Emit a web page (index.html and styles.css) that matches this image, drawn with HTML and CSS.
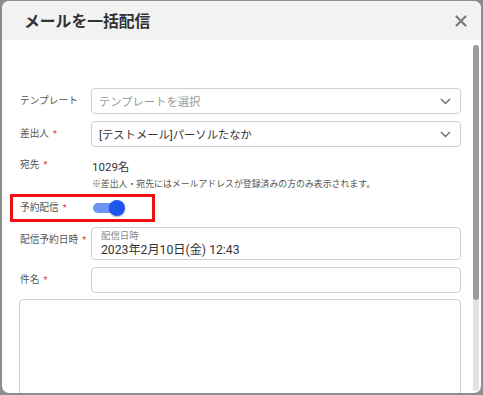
FILE: index.html
```html
<!DOCTYPE html>
<html lang="ja">
<head>
<meta charset="utf-8">
<link rel="stylesheet" href="styles.css">
</head>
<body>
<div class="dialog">
  <header class="dlg-head">
    <h1 class="title">メールを一括配信</h1>
    <span class="close"><svg width="12" height="12" viewBox="0 0 12 12"><path d="M1.5 1.5 L10.5 10.5 M10.5 1.5 L1.5 10.5" stroke="#7a7a7a" stroke-width="2.2" stroke-linecap="round"/></svg></span>
  </header>
  <div class="dlg-body">
    <div class="form">
      <div class="row row-select">
        <span class="lbl">テンプレート</span>
        <div class="select placeholder"><span>テンプレートを選択</span><svg class="chev" width="11" height="7" viewBox="0 0 11 7"><path d="M1 1 L5.5 5.5 L10 1" fill="none" stroke="#666" stroke-width="1.3"/></svg></div>
      </div>
      <div class="row row-select gap7">
        <span class="lbl">差出人<i class="req">*</i></span>
        <div class="select"><span>[テストメール]パーソルたなか</span><svg class="chev" width="11" height="7" viewBox="0 0 11 7"><path d="M1 1 L5.5 5.5 L10 1" fill="none" stroke="#666" stroke-width="1.3"/></svg></div>
      </div>
      <div class="row row-dest">
        <span class="lbl lbl-top">宛先<i class="req">*</i></span>
        <div class="dest">
          <div class="count">1029名</div>
          <div class="note">※差出人・宛先にはメールアドレスが登録済みの方のみ表示されます。</div>
        </div>
      </div>
      <div class="row row-toggle">
        <span class="lbl">予約配信<i class="req">*</i></span>
        <span class="toggle"><span class="track"></span><span class="knob"></span></span>
      </div>
      <div class="row row-date">
        <span class="lbl lbl-date">配信予約日時<i class="req">*</i></span>
        <div class="field date">
          <div class="mini">配信日時</div>
          <div class="val">2023年2月10日(金) 12:43</div>
        </div>
      </div>
      <div class="row row-subject">
        <span class="lbl">件名<i class="req">*</i></span>
        <div class="field subject"></div>
      </div>
      <div class="textarea"></div>
    </div>
    <div class="scrollbar"><div class="thumb"></div></div>
  </div>
</div>
</body>
</html>
```
FILE: styles.css
```css
html, body {
  margin: 0;
  padding: 0;
}
body {
  width: 483px;
  height: 395px;
  overflow: hidden;
  background: #8c8c8c;
  font-family: Roboto, "Noto Sans CJK JP", sans-serif;
  color: #333;
}
.dialog {
  margin: 1px 2px 0 2px;
  width: 479px;
  height: 392px;
  background: #fff;
  border-radius: 7px;
  overflow: hidden;
  display: flex;
  flex-direction: column;
}
.dlg-head {
  height: 39px;
  flex: none;
  background: #f2f2f2;
  display: flex;
  align-items: center;
  justify-content: space-between;
  padding: 0 14px 0 22px;
}
.title {
  margin: 0;
  font-size: 15.8px;
  font-weight: 700;
  color: #333;
}
.close {
  display: flex;
  width: 12px;
  height: 12px;
}
.dlg-body {
  flex: 1;
  display: flex;
  min-height: 0;
}
.form {
  flex: 1;
  padding: 48px 0 0 18px;
  overflow: hidden;
}
.row {
  display: grid;
  grid-template-columns: 71px 370px;
  align-items: center;
}
.lbl {
  font-size: 9.7px;
  color: #555;
  line-height: 16px;
  white-space: nowrap;
}
.req {
  font-style: normal;
  color: #e53935;
  font-size: 9px;
  margin-left: 4px;
}
.row-select { height: 26px; }
.gap7 { margin-top: 7px; }
.select {
  box-sizing: border-box;
  height: 26px;
  border: 1px solid #cfcfcf;
  border-radius: 4px;
  display: flex;
  align-items: center;
  justify-content: space-between;
  padding: 0 9px 0 7px;
  font-size: 11.3px;
  color: #333;
}
.select.placeholder { color: #9a9a9a; }
.chev { flex: none; margin-top: 1px; }
.row-dest {
  margin-top: 10px;
  align-items: start;
}
.count {
  font-size: 11.5px;
  line-height: 20px;
  color: #333;
  padding-left: 1px;
}
.note {
  font-size: 8.9px;
  line-height: 14px;
  color: #555;
  white-space: nowrap;
  padding-left: 1px;
}
.row-toggle {
  box-sizing: border-box;
  margin: 3px 0 0 -10px;
  width: 145px;
  height: 28px;
  border: 3px solid #ee1111;
  padding-left: 7px;
  grid-template-columns: 71px 40px;
}
.toggle {
  position: relative;
  display: block;
  width: 34px;
  height: 16px;
  margin-left: 2px;
}
.track {
  position: absolute;
  left: 0;
  top: 3px;
  width: 27px;
  height: 10px;
  border-radius: 5px;
  background: #6c94f4;
}
.knob {
  position: absolute;
  left: 16px;
  top: 0;
  width: 16px;
  height: 16px;
  border-radius: 50%;
  background: #1b57ee;
  box-shadow: 0 1px 2px rgba(0,0,0,0.3);
}
.row-date {
  margin-top: 5px;
  align-items: start;
}
.lbl-date { margin-top: 5px; }
.field {
  box-sizing: border-box;
  border: 1px solid #cfcfcf;
  border-radius: 4px;
}
.date {
  height: 33px;
  padding: 1px 9px 0 9px;
}
.mini {
  font-size: 9.4px;
  line-height: 12px;
  color: #888;
  padding-top: 1px;
}
.val {
  font-size: 12.2px;
  line-height: 16px;
  color: #333;
}
.row-subject { margin-top: 7px; }
.subject { height: 26px; }
.textarea {
  box-sizing: border-box;
  margin: 6px 0 0 -1px;
  width: 442px;
  height: 140px;
  border: 1px solid #cfcfcf;
  border-radius: 4px;
}
.scrollbar {
  flex: none;
  width: 6px;
  margin: 5px 2px 2px 0;
  border-radius: 3px;
  background: #e2e2e2;
}
.thumb {
  height: 255px;
  border-radius: 3px;
  background: #9b9b9b;
}
```
